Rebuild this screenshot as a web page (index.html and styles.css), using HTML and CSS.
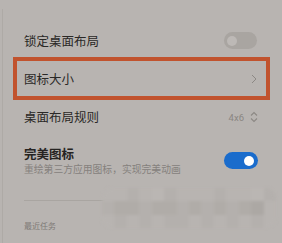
FILE: index.html
```html
<!DOCTYPE html>
<html lang="zh">
<head>
<meta charset="utf-8">
<link rel="stylesheet" href="styles.css">
</head>
<body>
<div class="screen">
  <div class="panel">
    <div class="row row-first">
      <span class="label">锁定桌面布局</span>
      <span class="switch off"><span class="knob"></span></span>
    </div>
    <div class="row row-hl">
      <span class="label">图标大小</span>
      <svg class="chev" width="6" height="10" viewBox="0 0 6 10"><polyline points="1,1 5,5 1,9" fill="none" stroke="#8c8884" stroke-width="1"/></svg>
    </div>
    <div class="row row-rule">
      <span class="label">桌面布局规则</span>
      <span class="value">4x6
        <svg class="updown" width="8" height="12" viewBox="0 0 8 12"><polyline points="1,4.5 4,1.5 7,4.5" fill="none" stroke="#8c8884" stroke-width="1.1"/><polyline points="1,7.5 4,10.5 7,7.5" fill="none" stroke="#8c8884" stroke-width="1.1"/></svg>
      </span>
    </div>
    <div class="row row-perfect">
      <div class="texts">
        <div class="title">完美图标</div>
        <div class="sub">重绘第三方应用图标，实现完美动画</div>
      </div>
      <span class="switch on"><span class="knob"></span></span>
    </div>
    <div class="divider"></div>
    <div class="section">最近任务</div>
  </div>
  <div class="mosaic">
    <span class="m m2"></span><span class="m m2"></span><span class="m m3"></span><span class="m m2"></span><span class="m m1"></span><span class="m m3"></span><span class="m m2"></span><span class="m m2"></span><span class="m m2"></span><span class="m m3"></span><span class="m m2"></span><span class="m m2"></span><span class="m m1"></span><span class="m m3"></span>
    <span class="m m3"></span><span class="m m4"></span><span class="m m4"></span><span class="m m3"></span><span class="m m4"></span><span class="m m4"></span><span class="m m3"></span><span class="m m4"></span><span class="m m3"></span><span class="m m4"></span><span class="m m3"></span><span class="m m4"></span><span class="m m5"></span><span class="m m2"></span>
    <span class="m m2"></span><span class="m m3"></span><span class="m m2"></span><span class="m m3"></span><span class="m m2"></span><span class="m m3"></span><span class="m m3"></span><span class="m m2"></span><span class="m m3"></span><span class="m m2"></span><span class="m m3"></span><span class="m m2"></span><span class="m m3"></span><span class="m m2"></span>
  </div>
</div>
</body>
</html>
```

FILE: styles.css
```css
* { box-sizing: border-box; }
html, body { margin: 0; padding: 0; }
body {
  width: 282px;
  height: 243px;
  overflow: hidden;
  background: #b8b4b1;
  font-family: "Noto Sans CJK SC", "Noto Sans", sans-serif;
}
.screen {
  position: relative;
  width: 282px;
  height: 243px;
  padding-top: 9px;
}
.panel {
  margin-left: 2px;
  border-left: 1px solid #aeaaa6;
  height: 234px;
  padding-top: 16px;
}
.row {
  display: flex;
  align-items: center;
  justify-content: space-between;
  padding: 0 24px 0 21px;
}
.label {
  font-size: 12.5px;
  color: #2a2826;
  line-height: 16px;
}
.row-first { height: 32px; }
.row-hl {
  height: 43px;
  margin: 0 12px 0 10px;
  border: 4px solid #c1532e;
  padding: 0 9px 0 7px;
}
.chev { display: block; }
.row-rule { height: 34px; }
.value {
  display: flex;
  align-items: center;
  gap: 6px;
  font-family: "Roboto", "Liberation Sans", sans-serif;
  font-size: 9.5px;
  color: #8a8682;
}
.updown { display: block; }
.row-perfect {
  padding-top: 12px;
  align-items: center;
}
.title {
  font-size: 12.5px;
  font-weight: 600;
  color: #262422;
  line-height: 16px;
}
.sub {
  font-size: 9.8px;
  color: #85817d;
  line-height: 14px;
  white-space: nowrap;
}
.switch {
  position: relative;
  width: 34px;
  height: 17px;
  border-radius: 9px;
  flex: none;
  margin-top: -1px;
}
.switch.off { background: #a9a5a1; margin-right: 1px; width: 33px; }
.switch.on { background: #1a6ccc; }
.knob {
  position: absolute;
  top: 3.5px;
  width: 10px;
  height: 10px;
  border-radius: 50%;
}
.off .knob { left: 3px; background: #bdb9b6; }
.on .knob { right: 4px; background: #ffffff; }
.divider {
  margin: 24px 23px 0 21px;
  height: 1px;
  background: #a9a5a1;
}
.section {
  margin: 19px 0 0 21px;
  font-size: 8px;
  line-height: 12px;
  color: #7e7a76;
}
.mosaic {
  position: absolute;
  left: 102px;
  top: 188px;
  width: 174px;
  height: 40px;
  border-radius: 10px;
  overflow: hidden;
  display: grid;
  grid-template-columns: repeat(14, 1fr);
  grid-template-rows: 13px 14px 13px;
  filter: blur(1.5px);
}
.m1 { background: #bab6b3; }
.m2 { background: #b8b4b1; }
.m3 { background: #b4b0ad; }
.m4 { background: #b0aca8; }
.m5 { background: #aca8a4; }
```
